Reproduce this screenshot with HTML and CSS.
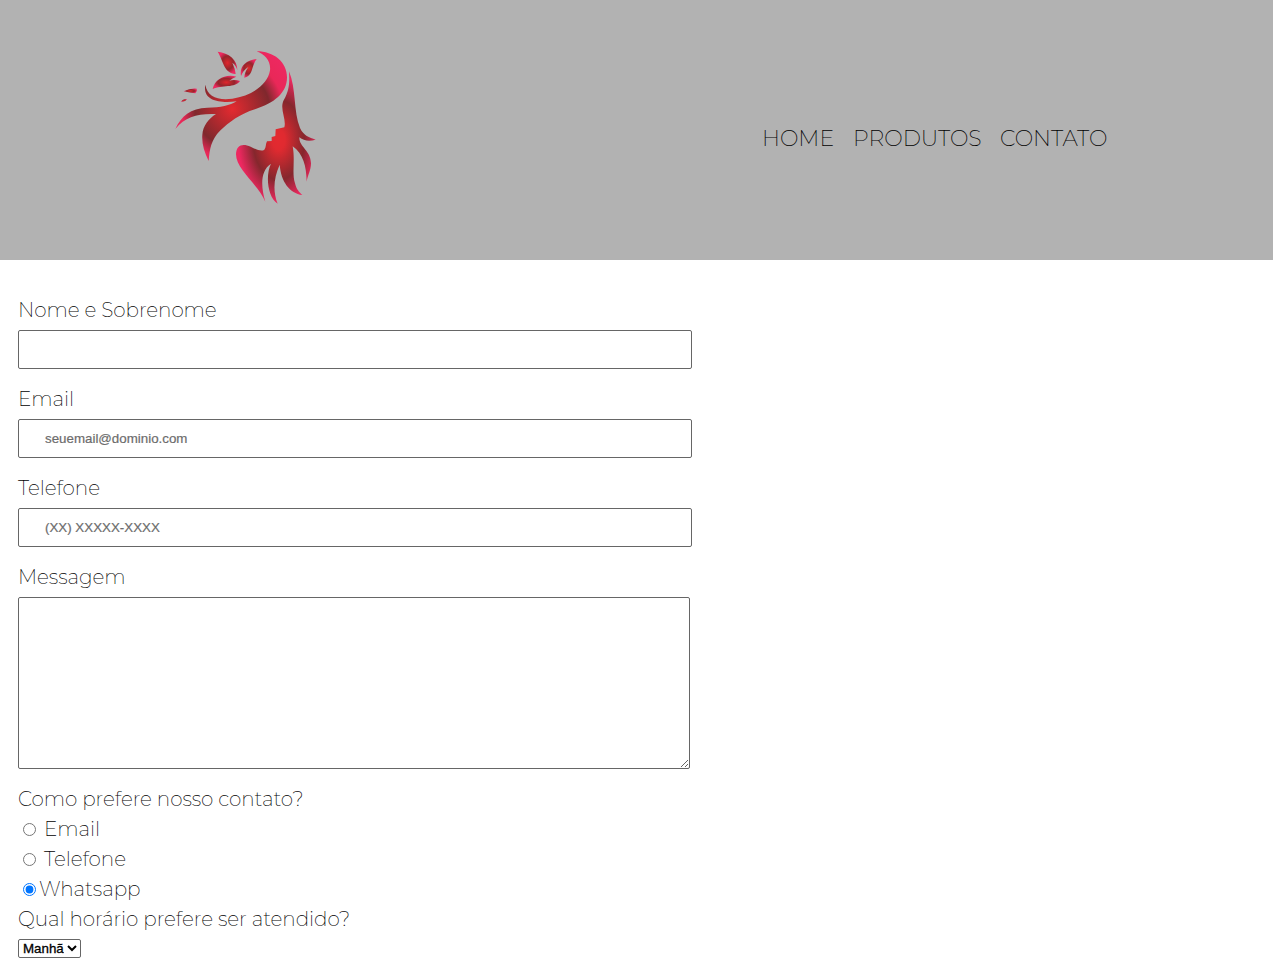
FILE: index.html
```html
<!DOCTYPE html>
<html lang="pt-BR">
<head>
<meta charset="utf-8">
<title>Contato</title>
<link rel="stylesheet" href="styles.css">
</head>
<body>
<header class="header">
  <svg class="logo" viewBox="0 0 480 510" aria-label="Logo">
    <defs>
      <radialGradient id="ribbon" gradientUnits="userSpaceOnUse" cx="202" cy="207" r="200">
        <stop offset="0" stop-color="#e42a30"/><stop offset=".56" stop-color="#7f282d"/><stop offset=".76" stop-color="#e92858"/><stop offset="1" stop-color="#ed2860"/>
      </radialGradient>
      <radialGradient id="hair" gradientUnits="userSpaceOnUse" cx="341" cy="300" r="128" gradientTransform="translate(0 -168) scale(1 1.56)">
        <stop offset="0" stop-color="#e42a30"/><stop offset=".15" stop-color="#e02a30"/><stop offset=".6" stop-color="#85272d"/><stop offset=".95" stop-color="#ed2860"/>
      </radialGradient>
      <radialGradient id="leaf">
        <stop offset="0" stop-color="#e0262c"/><stop offset=".6" stop-color="#94252c"/><stop offset="1" stop-color="#ed2860"/>
      </radialGradient>
    </defs>
    <path fill="url(#ribbon)" d="M275 34C326 34 366 66 366 112C366 160 326 190 272 207C221 223 194 246 165 272C139 299 134 325 131 363C117 335 110 310 112 284C114 257 131 236 153 222C98 220 62 229 31 267C48 229 77 204 127 203C168 203 194 196 215 184C162 190 112 182 121 134C127 169 157 182 202 176C264 166 309 132 315 91C318 62 300 44 275 34Z"/>
    <path fill="url(#hair)" d="M372 94C394 145 385 216 405 264C416 288 433 292 452 299C432 305 416 302 403 292C402 321 437 330 438 370C438 392 428 405 425 425C424 378 415 342 383 319C391 361 380 399 390 430C394 448 403 457 412 465C374 460 348 425 344 374C326 414 323 454 338 491C307 472 301 405 318 371C286 392 287 438 301 485C278 431 213 389 213 343C214 315 232 309 257 320C278 331 290 335 298 329C304 322 301 313 306 304L320 303L320 291L331 288L332 268L358 262C365 237 343 208 356 181C376 148 373 119 372 94Z"/>
    <g fill="url(#leaf)">
      <path d="M158 35C191 38 218 60 217 91Q214 77 202 68Q211 87 212 102C176 99 176 64 158 35Z"/>
      <path d="M275 57C242 62 223 79 228 108Q235 90 250 81Q238 98 238 113C265 108 258 79 275 57Z"/>
      <path d="M143 147C150 116 183 101 214 110Q202 114 193 122Q209 117 225 123C210 145 171 134 143 147Z"/>
      <path d="M56 154Q75 144 95 146Q98 154 91 160Q75 159 56 154Z"/>
      <path d="M48 186Q53 176 66 177Q63 184 48 186Z"/>
    </g>
  </svg>
  <nav class="nav">
    <a class="home">HOME</a><a class="products">PRODUTOS</a><a class="contact">CONTATO</a>
  </nav>
</header>
<main>
  <form class="form">
    <label for="name">Nome e Sobrenome</label>
    <input class="field" id="name" type="text">
    <label for="email">Email</label>
    <input class="field" id="email" type="email" placeholder="seuemail@dominio.com">
    <label for="phone">Telefone</label>
    <input class="field" id="phone" type="tel" placeholder="(XX) XXXXX-XXXX">
    <label for="message">Messagem</label>
    <textarea class="message" id="message"></textarea>
    <p class="question">Como prefere nosso contato?</p>
    <label class="option"><input type="radio" name="via"><span>Email</span></label>
    <label class="option"><input type="radio" name="via"><span>Telefone</span></label>
    <label class="option tight"><input type="radio" name="via" checked><span>Whatsapp</span></label>
    <p class="schedule">Qual horário prefere ser atendido?</p>
    <select class="select"><option>Manhã</option><option>Tarde</option><option>Noite</option></select>
  </form>
</main>
</body>
</html>
```
FILE: styles.css
```css
* { box-sizing: border-box; }
body { margin: 0; background: #fff; color: #000; font: 200 20px/30px Montserrat, Lato, sans-serif; overflow: hidden; }
.header { height: 260px; background: #b2b2b2; display: flex; justify-content: space-between; padding: 40px 165px 0; }
.logo { width: 160px; height: 170px; display: block; }
.nav { display: flex; gap: 20px; padding-top: 84px; font-size: 22px; white-space: nowrap; }
.nav a { width: 108px; }
.nav .home { width: 71px; }
.nav .products { width: 127px; }
.form { padding: 35px 18px 0; display: flex; flex-direction: column; align-items: flex-start; letter-spacing: -.06px; }
.field { width: 674px; height: 39px; margin: 5px 0 15px; padding: 0 26px; border: 1px solid #666; border-radius: 2px; font: 13.333px "Liberation Sans", Arial, sans-serif; color: #000; }
.field::placeholder { color: #6c6c6c; opacity: 1; -webkit-text-stroke: .2px #6c6c6c; }
.message { width: 672px; height: 172px; margin: 5px 0 15px; border: 1px solid #666; border-radius: 2px; padding: 2px; }
.question, .schedule { margin: 0; }
.option { height: 30px; display: flex; align-items: center; gap: 8px; }
.option input { width: 13px; height: 13px; margin: 0 0 0 5px; }
.tight { gap: 3px; }
.select { width: 63px; height: 19px; margin-top: 5px; border: 1px solid #666; border-radius: 2px; background: #fff; padding: 0; font: 13.333px "Liberation Sans", Arial, sans-serif; color: #000; -webkit-text-stroke: .3px #000; }
```
